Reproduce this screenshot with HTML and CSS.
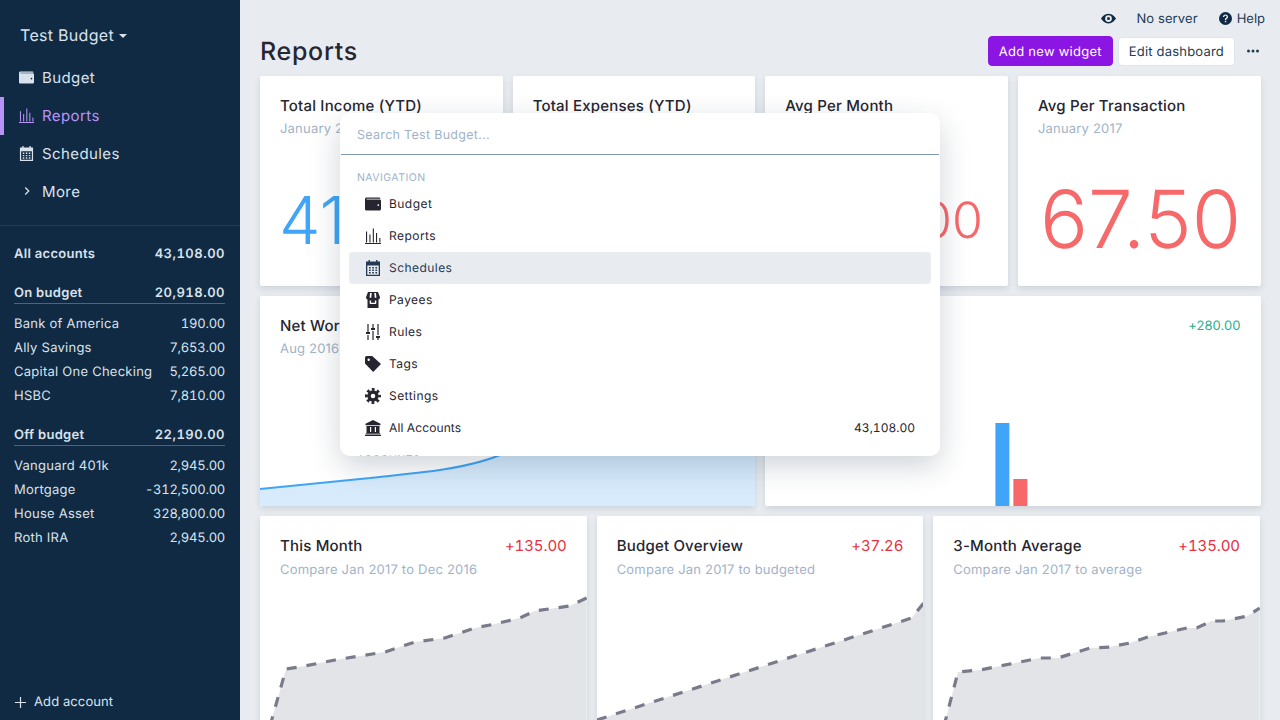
FILE: index.html
```html
<!DOCTYPE html>
<html lang="en">
<head>
<meta charset="utf-8">
<title>Reports</title>
<link rel="stylesheet" href="styles.css">
</head>
<body>
<svg class="defs" width="0" height="0" aria-hidden="true">
  <symbol id="i-wallet" viewBox="0 0 16 16"><path fill-rule="evenodd" d="M1.500 1.500H14c.8 0 1.500.6 1.500 1.300H1.800c-.4 0-.4.6 0 .6H14.500c.9 0 1.500.6 1.500 1.400v8.200c0 .9-.7 1.500-1.500 1.500h-13C.6 14.500 0 13.800 0 13V3C0 2.200.7 1.500 1.500 1.500zM13.300 8.200a.9.9 0 1 0 0 1.800.9.9 0 0 0 0-1.800z"/></symbol>
  <symbol id="i-chart" viewBox="0 0 16 16"><path d="M0 15h16v1H0zM1 3.500h1.100V14.500H1zM4.400 6.500h1.100v8H4.400zM7.800 .5h1.100v14H7.800zM11 5h1.100v9.500H11zM14.300 10h1.100v4.500h-1.100z"/></symbol>
  <symbol id="i-cal" viewBox="0 0 16 16"><path fill-rule="evenodd" d="M3.500 0h1.400v1.500h6.200V0h1.400v1.500h2.500V16H1V1.500h2.500zM2.300 5.500v9.200h11.400V5.500zM4 7h1.700v1.500H4zM7.200 7h1.700v1.500H7.200zM10.400 7h1.700v1.500h-1.700zM4 9.500h1.700V11H4zM7.200 9.500h1.700V11H7.200zM10.400 9.500h1.700V11h-1.700zM4 12h1.700v1.500H4zM7.200 12h1.700v1.500H7.200zM10.400 12h1.700v1.500h-1.700z"/></symbol>
  <symbol id="i-store" viewBox="0 0 16 16"><path fill-rule="evenodd" d="M3 0h10l2 5.200c0 1.200-.7 2-1.500 2.200V16h-11V7.400C1.700 7.200 1 6.400 1 5.200zM5 1 4.600 5.800H6.300L6.700 1zM9.300 1l.4 4.800h1.700L11 1zM4.700 8.500V11.300c0 .5.300.8.800.8h5c.5 0 .8-.3.8-.8V8.500H9.900v2.200H6.100V8.500z"/></symbol>
  <symbol id="i-sliders" viewBox="0 0 16 16"><path d="M2.400 0h1.200v8H5v2H1V8h1.400zM2.400 11h1.200v5H2.400zM7.400 0h1.200v4H10v2H6V4h1.400zM7.400 7h1.200v9H7.400zM12.400 0h1.200v11H12.400zM11 12h4v2h-1.400v2h-1.200v-2H11z"/></symbol>
  <symbol id="i-tag" viewBox="0 0 16 16"><path fill-rule="evenodd" d="M0 1.800C0 .8.800 0 1.800 0H7.200L16 8 8.200 16 0 7.400zM3.700 2.500a1.200 1.200 0 1 0 0 2.400 1.200 1.200 0 0 0 0-2.400z"/></symbol>
  <symbol id="i-gear" viewBox="0 0 16 16"><circle cx="8" cy="8" r="4" fill="none" stroke="currentColor" stroke-width="3.400"/><circle cx="8" cy="8" r="6.600" fill="none" stroke="currentColor" stroke-width="2.800" stroke-dasharray="2.700 2.484" stroke-dashoffset="1.350"/></symbol>
  <symbol id="i-bank" viewBox="0 0 16 16"><path fill-rule="evenodd" d="M8 0 15.500 3.700V5.300H.5V3.700zM1.500 6h13v7H1.500zM5 7v5h1.200V7zM9.800 7v5H11V7zM.8 13.300h14.400v1H.8zM0 14.700h16V16H0z"/></symbol>
  <symbol id="i-eye" viewBox="0 0 20 20"><path fill-rule="evenodd" d="M10 3.500C5 3.500 1.500 7.500 0 10c1.500 2.500 5 6.500 10 6.500s8.500-4 10-6.500c-1.500-2.500-5-6.500-10-6.500zM10 5.500a4.500 4.500 0 1 1 0 9 4.500 4.500 0 0 1 0-9zM10 8a2 2 0 1 0 0 4 2 2 0 0 0 0-4z"/></symbol>
  <symbol id="i-help" viewBox="0 0 20 20"><path fill-rule="evenodd" d="M10 0a10 10 0 1 1 0 20 10 10 0 0 1 0-20zM9 13.500v2.200h2.200v-2.200zM10 3.800c-2.300 0-4 1.400-4.100 3.700h2.200c.1-1 .8-1.700 1.900-1.700s1.800.6 1.800 1.500c0 .8-.5 1.200-1.300 1.800-1 .7-1.500 1.400-1.500 2.800v.4h2.100v-.3c0-.8.3-1.100 1.100-1.700 1-.7 1.800-1.400 1.800-2.800 0-2.200-1.700-3.700-4-3.700z"/></symbol>
</svg>

<div class="app">
  <aside class="sidebar">
    <div class="budget-name">Test Budget <span class="caret"></span></div>
    <nav class="nav">
      <div class="nav-item"><svg class="nav-icon"><use href="#i-wallet"/></svg>Budget</div>
      <div class="nav-item active"><svg class="nav-icon"><use href="#i-chart"/></svg>Reports</div>
      <div class="nav-item"><svg class="nav-icon"><use href="#i-cal"/></svg>Schedules</div>
      <div class="nav-item"><svg class="nav-icon chev" viewBox="0 0 20 20"><path d="M7.500 5l5 5-5 5" fill="none" stroke="currentColor" stroke-width="1.800"/></svg>More</div>
    </nav>
    <div class="accounts">
      <div class="acct-row strong all"><span>All accounts</span><span class="amt">43,108.00</span></div>
      <div class="acct-row strong group"><span>On budget</span><span class="amt">20,918.00</span></div>
      <div class="acct-row"><span>Bank of America</span><span class="amt">190.00</span></div>
      <div class="acct-row"><span>Ally Savings</span><span class="amt">7,653.00</span></div>
      <div class="acct-row"><span>Capital One Checking</span><span class="amt">5,265.00</span></div>
      <div class="acct-row"><span>HSBC</span><span class="amt">7,810.00</span></div>
      <div class="acct-row strong group"><span>Off budget</span><span class="amt">22,190.00</span></div>
      <div class="acct-row"><span>Vanguard 401k</span><span class="amt">2,945.00</span></div>
      <div class="acct-row"><span>Mortgage</span><span class="amt">-312,500.00</span></div>
      <div class="acct-row"><span>House Asset</span><span class="amt">328,800.00</span></div>
      <div class="acct-row"><span>Roth IRA</span><span class="amt">2,945.00</span></div>
    </div>
    <div class="add-account"><svg class="plus" viewBox="0 0 14 14"><path d="M7 1v12M1 7h12" stroke="currentColor" stroke-width="1.300" fill="none"/></svg>Add account</div>
  </aside>

  <main class="main">
    <div class="topbar">
      <svg class="eye"><use href="#i-eye"/></svg>
      <span class="server">No server</span>
      <span class="help"><svg class="help-icon"><use href="#i-help"/></svg>Help</span>
    </div>
    <div class="header">
      <h1 class="title">Reports</h1>
      <div class="actions">
        <button class="btn primary">Add new widget</button>
        <button class="btn">Edit dashboard</button>
        <svg class="dots" viewBox="0 0 14 4"><circle cx="2.500" cy="2" r="1.500"/><circle cx="7" cy="2" r="1.500"/><circle cx="11.500" cy="2" r="1.500"/></svg>
      </div>
    </div>

    <section class="row four">
      <article class="card summary"><h2 class="card-title">Total Income (YTD)</h2><p class="card-sub">January 2017 - January 2017</p><div class="big blue">41,108.00</div></article>
      <article class="card summary"><h2 class="card-title">Total Expenses (YTD)</h2><p class="card-sub">January 2017 - January 2017</p><div class="big red">-1,280.00</div></article>
      <article class="card summary"><h2 class="card-title">Avg Per Month</h2><p class="card-sub">January 2017</p><div class="big red mid"><span class="end">1,280.00</span></div></article>
      <article class="card summary"><h2 class="card-title">Avg Per Transaction</h2><p class="card-sub">January 2017</p><div class="big red">67.50</div></article>
    </section>

    <section class="row two">
      <article class="card chart-card">
        <h2 class="card-title">Net Worth</h2><p class="card-sub">Aug 2016 - Jan 2017</p>
        <svg class="chart" viewBox="0 0 495 210" preserveAspectRatio="none">
          <path d="M0 193 L60 187 L110 182 C130 179.500 150 178 173 175 C195 172 220 167 240 159 C260 150 300 120 495 60 V210 H0Z" fill="#d7ebfc"/>
          <path d="M0 193 L60 187 L110 182 C130 179.500 150 178 173 175 C195 172 220 167 240 159 C260 150 300 120 495 60" fill="none" stroke="#40a5f8" stroke-width="2"/>
        </svg>
      </article>
      <article class="card chart-card">
        <div class="card-head"><h2 class="card-title">Cash Flow</h2><span class="delta green">+280.00</span></div>
        <p class="card-sub">Jan 2017</p>
        <svg class="chart" viewBox="0 0 496 210" preserveAspectRatio="none">
          <rect x="230.750" y="127" width="14" height="83" fill="#40a5f8"/>
          <rect x="248.750" y="183" width="14" height="27" fill="#f7686a"/>
        </svg>
      </article>
    </section>

    <section class="row three">
      <article class="card chart-card">
        <div class="card-head"><h2 class="card-title">This Month</h2><span class="delta crimson">+135.00</span></div>
        <p class="card-sub">Compare Jan 2017 to Dec 2016</p>
        <svg class="chart" viewBox="0 0 327 210" preserveAspectRatio="none">
          <path class="area" d="M10 210 L26 153 L45 150 L75 144 L125 136 L155 126 L185 122 L215 112 L235 108 L260 102 L275 95 L310 90 L327 82 V220 H10Z"/>
          <path class="dash" d="M10 210 L26 153 L45 150 L75 144 L125 136 L155 126 L185 122 L215 112 L235 108 L260 102 L275 95 L310 90 L327 82"/>
        </svg>
      </article>
      <article class="card chart-card">
        <div class="card-head"><h2 class="card-title">Budget Overview</h2><span class="delta crimson">+37.26</span></div>
        <p class="card-sub">Compare Jan 2017 to budgeted</p>
        <svg class="chart" viewBox="0 0 327 210" preserveAspectRatio="none">
          <path class="area" d="M0 204 L315 102 L327 87 V220 H0Z"/>
          <path class="dash" d="M0 204 L315 102 L327 87"/>
        </svg>
      </article>
      <article class="card chart-card">
        <div class="card-head"><h2 class="card-title">3-Month Average</h2><span class="delta crimson">+135.00</span></div>
        <p class="card-sub">Compare Jan 2017 to average</p>
        <svg class="chart" viewBox="0 0 327 210" preserveAspectRatio="none">
          <path class="area" d="M11 210 L25 156 L47 154 L87 146 L107 142 L125 142 L157 132 L177 131 L197 127 L215 121 L254 112 L264 112 L279 105 L290 105 L315 100 L327 92 V220 H11Z"/>
          <path class="dash" d="M11 210 L25 156 L47 154 L87 146 L107 142 L125 142 L157 132 L177 131 L197 127 L215 121 L254 112 L264 112 L279 105 L290 105 L315 100 L327 92"/>
        </svg>
      </article>
    </section>
  </main>

  <div class="palette">
    <div class="search">Search Test Budget...</div>
    <div class="palette-list">
      <div class="group-label">NAVIGATION</div>
      <div class="cmd"><svg class="cmd-icon"><use href="#i-wallet"/></svg>Budget</div>
      <div class="cmd"><svg class="cmd-icon"><use href="#i-chart"/></svg>Reports</div>
      <div class="cmd selected"><svg class="cmd-icon"><use href="#i-cal"/></svg>Schedules</div>
      <div class="cmd"><svg class="cmd-icon"><use href="#i-store"/></svg>Payees</div>
      <div class="cmd"><svg class="cmd-icon"><use href="#i-sliders"/></svg>Rules</div>
      <div class="cmd"><svg class="cmd-icon"><use href="#i-tag"/></svg>Tags</div>
      <div class="cmd"><svg class="cmd-icon"><use href="#i-gear"/></svg>Settings</div>
      <div class="cmd"><svg class="cmd-icon"><use href="#i-bank"/></svg><span class="cmd-tight">All Accounts</span><span class="cmd-value">43,108.00</span></div>
      <div class="group-label next">ACCOUNTS</div>
    </div>
  </div>
</div>
</body>
</html>
```

FILE: styles.css
```css
* { box-sizing: border-box; }
html, body { margin: 0; height: 100%; overflow: hidden; }
body { font-family: Inter, "Liberation Sans", sans-serif; color: #272630; background: #e8ecf0; font-size: 13px; text-rendering: geometricPrecision; }
.defs { position: absolute; }
svg { fill: currentColor; display: block; }

.app { display: flex; height: 720px; overflow: hidden; position: relative; }

.sidebar { width: 240px; flex: none; background: #102a43; color: #d9e2ec; display: flex; flex-direction: column; height: 720px; }
.budget-name { padding: 24px 0 0 20px; height: 59px; font-size: 16px; font-weight: 400; line-height: 23px; letter-spacing: .3px; }
.caret { display: inline-block; width: 0; height: 0; border: 4px solid transparent; border-top: 4px solid #d9e2ec; border-bottom: 0; vertical-align: 3px; }
.nav { display: flex; flex-direction: column; height: 167px; border-bottom: 1px solid #243b53; padding-bottom: 15px; }
.nav-item { height: 38px; display: flex; align-items: center; padding-left: 19px; font-size: 15px; font-weight: 400; gap: 8px; letter-spacing: .4px; }
.nav-item.active { color: #b794f6; border-left: 4px solid #b794f6; padding-left: 15px; }
.nav-icon { width: 15px; height: 15px; }
.chev { width: 14px; height: 14px; margin-left: 1px; }
.accounts { padding: 16px 15px 0 14px; flex: 1; }
.acct-row { display: flex; justify-content: space-between; align-items: center; height: 24px; font-size: 13px; letter-spacing: .25px; }
.amt { font-variant-numeric: tabular-nums; letter-spacing: -.25px; }
.acct-row.strong { font-weight: 600; letter-spacing: .3px; }
.strong .amt { letter-spacing: .5px; }
.acct-row.group { margin-top: 15px; height: 23px; border-bottom: 1px solid #486581; margin-bottom: 8px; padding-top: 1px; }
.add-account { height: 36px; display: flex; align-items: center; gap: 7px; padding: 0 0 0 14px; font-size: 13px; letter-spacing: .1px; }
.plus { width: 13px; height: 13px; }

.main { flex: 1; min-width: 0; padding: 0 19px 0 20px; height: 720px; overflow: hidden; }
.topbar { height: 36px; display: flex; justify-content: flex-end; align-items: center; color: #243b53; font-size: 13px; margin-right: -4px; padding-top: 1px; letter-spacing: .1px; }
.eye { width: 15px; height: 15px; color: #102a43; margin-right: 20px; }
.server { margin-right: 21px; }
.help { display: flex; align-items: center; gap: 5px; letter-spacing: 0; }
.help-icon { width: 13px; height: 13px; color: #102a43; }
.header { display: flex; justify-content: space-between; align-items: center; height: 30px; margin-bottom: 10px; }
.title { margin: 0; padding-top: 2px; font-size: 25px; font-weight: 450; line-height: 30px; letter-spacing: .7px; color: #272630; }
.actions { display: flex; align-items: center; gap: 5px; }
.btn { font: 400 13px Inter, sans-serif; height: 29px; padding: 1px 10px 0; background: #fff; border: 1px solid #dde5ee; border-radius: 4px; color: #243b53; letter-spacing: .2px; text-rendering: geometricPrecision; }
.btn.primary { background: #8b15e3; border-color: #8b15e3; color: #fff; height: 30px; letter-spacing: .25px; }
.dots { width: 14px; height: 4px; margin: 0 1px 0 6px; color: #243b53; }

.row { display: grid; gap: 10px; height: 210px; margin-bottom: 10px; }
.row.four { grid-template-columns: repeat(4, 1fr); margin-right: .5px; }
.row.two { grid-template-columns: repeat(2, 1fr); margin-right: .5px; }
.row.three { grid-template-columns: repeat(3, 1fr); margin-right: 1px; }
.card { background: #fff; box-shadow: 0 3px 6px rgba(16, 42, 67, .12); border-radius: 2px; position: relative; overflow: hidden; padding: 21px 20px 0; display: flex; flex-direction: column; }
.card-head { display: flex; justify-content: space-between; align-items: center; height: 18px; }
.card-title { margin: 0; font-size: 15px; font-weight: 450; line-height: 18px; letter-spacing: .2px; color: #272630; }
.card-sub { margin: 4px 0 0; font-size: 13px; line-height: 20px; color: #9fb3c8; letter-spacing: .2px; }
.card-head + .card-sub { margin-top: 5px; }
.big { font-size: 80px; font-weight: 300; line-height: 100px; margin-top: 31px; white-space: nowrap; text-align: center; }
.big.blue { color: #40a5f8; text-align: left; font-size: 66px; margin-left: -1px; }
.big.red { color: #f7686a; padding-left: 2px; }
.big.mid { font-size: 50px; display: flex; justify-content: flex-end; margin: 32px 5px 0 0; }
.delta { font-size: 15px; line-height: 18px; letter-spacing: -.1px; font-variant-numeric: tabular-nums; }
.delta.green { font-size: 13px; color: #2bb08a; letter-spacing: .05px; font-variant-numeric: normal; margin: -1px 0 0; }
.delta.crimson { color: #e8303f; }
.chart { position: absolute; left: 0; top: 0; width: 100%; height: 210px; }
.area { fill: #e3e4e8; }
.dash { fill: none; stroke: #7a7b8a; stroke-width: 3.200; stroke-dasharray: 10 10; }

.palette { position: absolute; left: 340px; top: 113px; width: 600px; height: 343px; background: #fff; border-radius: 10px; box-shadow: 0 10px 30px rgba(16, 42, 67, .2); overflow: hidden; z-index: 5; }
.search { height: 42px; margin: 0 1px; padding: 3px 16px 0; line-height: 39px; color: #9fb3c8; border-bottom: 1px solid #829ab1; font-size: 12.500px; letter-spacing: .3px; }
.palette-list { padding: 15px 9px 0; }
.group-label { font-size: 10.500px; color: #9fb3c8; letter-spacing: .45px; padding-left: 8px; line-height: 16px; margin-bottom: 2px; }
.group-label.next { margin-top: 8px; }
.cmd { height: 32px; display: flex; align-items: center; padding: 0 16px 1px; gap: 8px; font-size: 12px; letter-spacing: .45px; border-radius: 4px; color: #272630; }
.cmd.selected { background: #e8ecf0; color: #243b53; }
.cmd-icon { width: 16px; height: 16px; flex: none; margin-top: 1px; }
.cmd-tight { letter-spacing: .1px; }
.cmd-value { margin-left: auto; font-variant-numeric: tabular-nums; letter-spacing: 0; }
```
